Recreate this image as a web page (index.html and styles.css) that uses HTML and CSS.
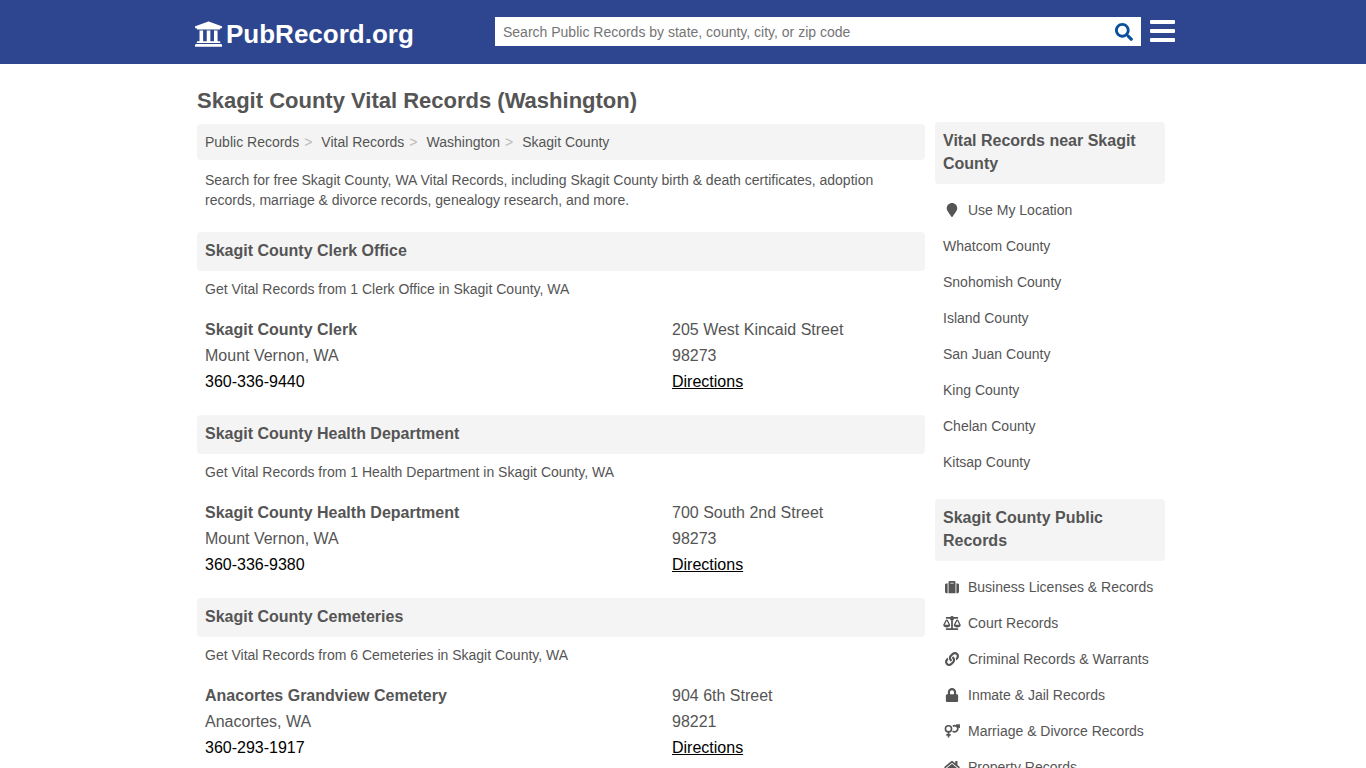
FILE: index.html
```html
<!DOCTYPE html>
<html lang="en">
<head>
    <meta charset="UTF-8">
    <meta name="viewport" content="width=device-width, initial-scale=1.0">
    <title>Skagit County Vital Records (Washington)</title>
    <link rel="stylesheet" href="styles.css">
</head>
<body>
    <header class="header">
        <div class="container header-inner">
            <a class="logo" href="#">
                <svg class="logo-icon" viewBox="16 16 496 480"><path d="M496 128v16a8 8 0 0 1-8 8h-24v12c0 6.627-5.373 12-12 12H60c-6.627 0-12-5.373-12-12v-12H24a8 8 0 0 1-8-8v-16a8 8 0 0 1 4.941-7.392l232-88a7.996 7.996 0 0 1 6.118 0l232 88A8 8 0 0 1 496 128zm-24 304H40c-13.255 0-24 10.745-24 24v16a8 8 0 0 0 8 8h464a8 8 0 0 0 8-8v-16c0-13.255-10.745-24-24-24zM96 192v192H60c-6.627 0-12 5.373-12 12v20h416v-20c0-6.627-5.373-12-12-12h-36V192h-64v192h-64V192h-64v192h-64V192H96z"/></svg>
                <span>PubRecord.org</span>
            </a>
            <form class="search">
                <input class="search-input" type="text" aria-label="Search Public Records" placeholder="Search Public Records by state, county, city, or zip code">
                <button class="search-button" type="submit" aria-label="Search">
                    <svg viewBox="0 0 512 512"><path d="M505 442.7L405.3 343c-4.5-4.5-10.6-7-17-7H372c27.6-35.3 44-79.7 44-128C416 93.1 322.9 0 208 0S0 93.1 0 208s93.1 208 208 208c48.3 0 92.7-16.4 128-44v16.3c0 6.4 2.5 12.5 7 17l99.7 99.7c9.4 9.4 24.6 9.4 33.9 0l28.3-28.3c9.4-9.4 9.4-24.6.1-34zM208 336c-70.7 0-128-57.2-128-128 0-70.7 57.2-128 128-128 70.7 0 128 57.2 128 128 0 70.7-57.2 128-128 128z"/></svg>
                </button>
            </form>
            <button class="menu-button" type="button" aria-label="Menu">
                <svg viewBox="0 0 25 22"><rect width="25" height="4" rx="1"/><rect y="9" width="25" height="4" rx="1"/><rect y="18" width="25" height="4" rx="1"/></svg>
            </button>
        </div>
    </header>

    <div class="container page">
        <h1>Skagit County Vital Records (Washington)</h1>
        <div class="columns">
            <main class="main">
                <nav class="breadcrumb">
                    <a href="#">Public Records</a>
                    <a href="#">Vital Records</a>
                    <a href="#">Washington</a>
                    <a href="#">Skagit County</a>
                </nav>
                <p class="text">Search for free Skagit County, WA Vital Records, including Skagit County birth &amp; death certificates, adoption records, marriage &amp; divorce records, genealogy research, and more.</p>

                <section class="office">
                    <h2>Skagit County Clerk Office</h2>
                    <p class="text">Get Vital Records from 1 Clerk Office in Skagit County, WA</p>
                    <div class="listing">
                        <div class="listing-name">
                            <h3>Skagit County Clerk</h3>
                            <div>Mount Vernon, WA</div>
                            <a class="phone" href="tel:360-336-9440">360-336-9440</a>
                        </div>
                        <div class="listing-address">
                            <div>205 West Kincaid Street</div>
                            <div>98273</div>
                            <a class="directions" href="#">Directions</a>
                        </div>
                    </div>
                </section>

                <section class="office">
                    <h2>Skagit County Health Department</h2>
                    <p class="text">Get Vital Records from 1 Health Department in Skagit County, WA</p>
                    <div class="listing">
                        <div class="listing-name">
                            <h3>Skagit County Health Department</h3>
                            <div>Mount Vernon, WA</div>
                            <a class="phone" href="tel:360-336-9380">360-336-9380</a>
                        </div>
                        <div class="listing-address">
                            <div>700 South 2nd Street</div>
                            <div>98273</div>
                            <a class="directions" href="#">Directions</a>
                        </div>
                    </div>
                </section>

                <section class="office">
                    <h2>Skagit County Cemeteries</h2>
                    <p class="text">Get Vital Records from 6 Cemeteries in Skagit County, WA</p>
                    <div class="listing">
                        <div class="listing-name">
                            <h3>Anacortes Grandview Cemetery</h3>
                            <div>Anacortes, WA</div>
                            <a class="phone" href="tel:360-293-1917">360-293-1917</a>
                        </div>
                        <div class="listing-address">
                            <div>904 6th Street</div>
                            <div>98221</div>
                            <a class="directions" href="#">Directions</a>
                        </div>
                    </div>
                </section>
            </main>

            <aside class="sidebar">
                <h2>Vital Records near Skagit County</h2>
                <ul class="links">
                    <li><a href="#"><svg class="icon" viewBox="0 0 384 512"><path d="M172.268 501.67C26.97 291.031 0 269.413 0 192 0 85.961 85.961 0 192 0s192 85.961 192 192c0 77.413-26.97 99.031-172.268 309.67-9.535 13.774-29.93 13.773-39.464 0z"/></svg>Use My Location</a></li>
                    <li><a href="#">Whatcom County</a></li>
                    <li><a href="#">Snohomish County</a></li>
                    <li><a href="#">Island County</a></li>
                    <li><a href="#">San Juan County</a></li>
                    <li><a href="#">King County</a></li>
                    <li><a href="#">Chelan County</a></li>
                    <li><a href="#">Kitsap County</a></li>
                </ul>

                <h2>Skagit County Public Records</h2>
                <ul class="links">
                    <li><a href="#"><svg class="icon" viewBox="0 0 512 512"><path d="M128 480h256V80c0-26.5-21.5-48-48-48H176c-26.5 0-48 21.5-48 48v400zm64-384h128v32H192V96zm320 80v256c0 26.5-21.5 48-48 48h-48V128h48c26.5 0 48 21.5 48 48zM96 480H48c-26.5 0-48-21.5-48-48V176c0-26.5 21.5-48 48-48h48v352z"/></svg>Business Licenses &amp; Records</a></li>
                    <li><a href="#"><svg class="icon" viewBox="0 0 640 512"><path d="M256 336h-.02c0-16.18 1.34-8.73-85.05-181.51-17.65-35.29-68.19-35.36-85.87 0C-2.06 328.75.02 320.33.02 336H0c0 44.18 57.31 80 128 80s128-35.82 128-80zM128 176l72 144H56l72-144zm511.98 160c0-16.18 1.34-8.73-85.05-181.51-17.65-35.29-68.19-35.36-85.87 0-87.12 174.26-85.04 165.84-85.04 181.51H384c0 44.18 57.31 80 128 80s128-35.82 128-80h-.02zM440 320l72-144 72 144H440zm88 128H352V153.25c23.51-10.29 41.16-31.48 46.39-57.25H528c8.84 0 16-7.16 16-16V48c0-8.84-7.16-16-16-16H383.64C369.04 12.68 346.09 0 320 0s-49.04 12.68-63.64 32H112c-8.84 0-16 7.16-16 16v32c0 8.84 7.16 16 16 16h129.61c5.23 25.76 22.87 46.96 46.39 57.25V448H112c-8.84 0-16 7.16-16 16v32c0 8.84 7.16 16 16 16h416c8.84 0 16-7.16 16-16v-32c0-8.84-7.16-16-16-16z"/></svg>Court Records</a></li>
                    <li><a href="#"><svg class="icon" viewBox="0 0 512 512"><path d="M326.612 185.391c59.747 59.809 58.927 155.698.36 214.59-.11.12-.24.25-.36.37l-67.2 67.2c-59.27 59.27-155.699 59.262-214.96 0-59.27-59.26-59.27-155.7 0-214.96l37.106-37.106c9.84-9.84 26.786-3.3 27.294 10.606.648 17.722 3.826 35.527 9.69 52.721 1.986 5.822.567 12.262-3.783 16.612l-13.087 13.087c-28.026 28.026-28.905 73.66-1.155 101.96 28.024 28.579 74.086 28.749 102.325.51l67.2-67.19c28.191-28.191 28.073-73.757 0-101.83-3.701-3.694-7.429-6.564-10.341-8.569a16.037 16.037 0 0 1-6.947-12.606c-.396-10.567 3.348-21.456 11.698-29.806l21.054-21.055c5.521-5.521 14.182-6.199 20.584-1.731a152.482 152.482 0 0 1 20.522 17.197zM467.547 44.449c-59.261-59.262-155.69-59.27-214.96 0l-67.2 67.2c-.12.12-.25.25-.36.37-58.566 58.892-59.387 154.781.36 214.59a152.454 152.454 0 0 0 20.521 17.196c6.402 4.468 15.064 3.789 20.584-1.731l21.054-21.055c8.35-8.35 12.094-19.239 11.698-29.806a16.037 16.037 0 0 0-6.947-12.606c-2.912-2.005-6.64-4.875-10.341-8.569-28.073-28.073-28.191-73.639 0-101.83l67.2-67.19c28.239-28.239 74.3-28.069 102.325.51 27.75 28.3 26.872 73.934-1.155 101.96l-13.087 13.087c-4.35 4.35-5.769 10.79-3.783 16.612 5.864 17.194 9.042 34.999 9.69 52.721.509 13.906 17.454 20.446 27.294 10.606l37.106-37.106c59.271-59.259 59.271-155.699.001-214.959z"/></svg>Criminal Records &amp; Warrants</a></li>
                    <li><a href="#"><svg class="icon" viewBox="0 0 448 512"><path d="M400 224h-24v-72C376 68.2 307.8 0 224 0S72 68.2 72 152v72H48c-26.5 0-48 21.5-48 48v192c0 26.5 21.5 48 48 48h352c26.5 0 48-21.5 48-48V272c0-26.5-21.5-48-48-48zm-104 0H152v-72c0-39.7 32.3-72 72-72s72 32.3 72 72v72z"/></svg>Inmate &amp; Jail Records</a></li>
                    <li><a href="#"><svg class="icon icon-line" viewBox="0 0 576 512"><circle cx="160" cy="176" r="112"/><path d="M160 288v208M80 400h160M320 82a112 112 0 1 1-10 176M464 116l76-76M440 36h108v108"/></svg>Marriage &amp; Divorce Records</a></li>
                    <li><a href="#"><svg class="icon" viewBox="0 0 576 512"><path d="M280.37 148.26L96 300.11V464a16 16 0 0 0 16 16l112.06-.29a16 16 0 0 0 15.92-16V368a16 16 0 0 1 16-16h64a16 16 0 0 1 16 16v95.64a16 16 0 0 0 16 16.05L464 480a16 16 0 0 0 16-16V300L295.67 148.26a12.19 12.19 0 0 0-15.3 0zM571.6 251.47L488 182.56V44.05a12 12 0 0 0-12-12h-56a12 12 0 0 0-12 12v72.61L318.47 43a48 48 0 0 0-61 0L4.34 251.47a12 12 0 0 0-1.6 16.9l25.5 31A12 12 0 0 0 45.15 301l235.22-193.74a12.19 12.19 0 0 1 15.3 0L530.9 301a12 12 0 0 0 16.9-1.6l25.5-31a12 12 0 0 0-1.7-16.93z"/></svg>Property Records</a></li>
                </ul>
            </aside>
        </div>
    </div>
</body>
</html>
```
FILE: styles.css
```css
* {
    box-sizing: border-box;
}
body {
    font-family: "Liberation Sans", Arial, sans-serif;
    font-size: 16px;
    line-height: 26px;
    color: #555;
    background-color: #fff;
    margin: 0;
}
h1, h2, h3, p, ul {
    margin: 0;
    padding: 0;
}
a {
    color: inherit;
    text-decoration: none;
}
svg {
    fill: currentColor;
}
.container {
    max-width: 984px;
    margin: 0 auto;
}

/* header */
.header {
    background-color: #2e468f;
    color: #fff;
}
.header-inner {
    display: flex;
    align-items: center;
    height: 64px;
    padding: 0 0 2px 4px;
}
.logo {
    display: flex;
    align-items: center;
    gap: 3px;
    width: 300px;
    font-size: 26px;
    font-weight: bold;
    padding-top: 6px;
}
.logo-icon {
    width: 28px;
    height: 28px;
}
.search {
    display: flex;
    flex: 1;
    height: 29px;
    background-color: #fff;
}
.search-input {
    flex: 1;
    min-width: 0;
    padding: 2px 8px 0;
    border: none;
    outline: none;
    background: none;
    font-family: inherit;
    font-size: 14px;
    color: #555;
}
.search-input::placeholder {
    color: #757575;
}
.search-button {
    display: flex;
    align-items: center;
    padding: 2px 8px 0;
    border: none;
    background: none;
    color: #0b4f9c;
    cursor: pointer;
}
.search-button svg {
    width: 18px;
    height: 18px;
}
.menu-button {
    display: flex;
    margin-left: 9px;
    padding: 0;
    border: none;
    background: none;
    color: #fff;
    cursor: pointer;
}
.menu-button svg {
    width: 25px;
    height: 22px;
}

/* page */
.page {
    padding: 23px 10px 0 6px;
}
h1 {
    font-size: 22px;
    line-height: 28px;
}
.columns {
    display: flex;
    align-items: flex-start;
    gap: 10px;
    margin-top: 7px;
}
.main {
    flex: 1;
    min-width: 0;
    padding-top: 2px;
}
.breadcrumb {
    display: flex;
    padding: 8px;
    background-color: #f4f4f4;
    border-radius: 4px;
    font-size: 14px;
    line-height: 20px;
}
.breadcrumb a:not(:last-child)::after {
    content: ">";
    color: #bbb;
    margin: 0 9px 0 5px;
}
.text {
    padding: 10px 8px 2px;
    font-size: 14px;
    line-height: 20px;
}
h2 {
    padding: 7px 8px 9px;
    background-color: #f4f4f4;
    border-radius: 4px;
    font-size: 16px;
    line-height: 23px;
}
.office {
    margin-top: 20px;
}
.office .text {
    padding-top: 8px;
}
.listing {
    display: flex;
    padding: 16px 8px 0;
}
.listing-name {
    flex: 1;
}
.listing-address {
    width: 245px;
}
.listing h3 {
    font-size: 16px;
}
.phone, .directions {
    color: #000;
}
.directions {
    text-decoration: underline;
}

/* sidebar */
.sidebar {
    width: 230px;
}
.links {
    list-style: none;
    padding: 8px 0 19px;
    font-size: 14px;
    line-height: 20px;
}
.links a {
    display: flex;
    align-items: center;
    padding: 8px;
}
.icon {
    width: 18px;
    height: 14px;
    margin-right: 7px;
}
.icon-line {
    fill: none;
    stroke: currentColor;
    stroke-width: 60px;
}
```
